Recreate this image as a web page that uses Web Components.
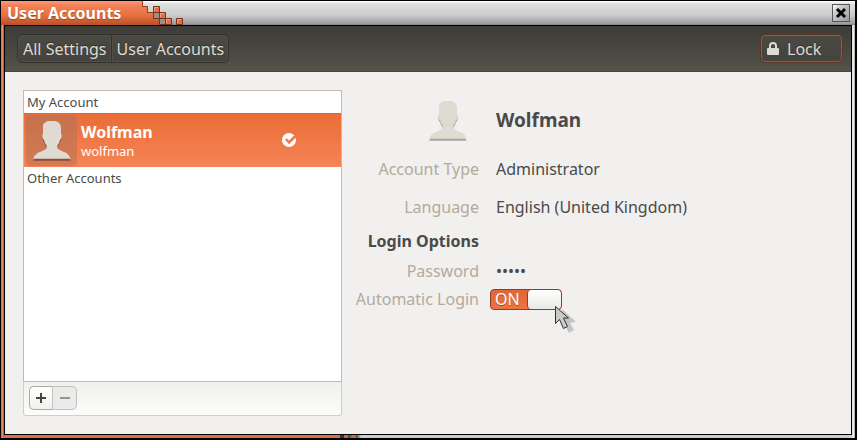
<!DOCTYPE html>
<html lang="en">
<head>
<meta charset="utf-8">
<meta name="viewport" content="width=device-width, initial-scale=1">
<title>User Accounts</title>
<style>
    html { height: 100%; }
    body {
        display: flex;
        min-height: 100%;
        margin: 0;
        background: #000;
        color: #4a4a4a;
        font-family: "Noto Sans", "Open Sans", sans-serif;
        font-size: 16px;
        line-height: 20px;
    }
    app-window { flex: 1; }
</style>
</head>
<body>
    <app-window heading="User Accounts">
        <tool-bar slot="toolbar"></tool-bar>
        <account-list>
            <list-heading>My Account</list-heading>
            <account-row name="Wolfman" login="wolfman"></account-row>
            <list-heading>Other Accounts</list-heading>
        </account-list>
        <account-details>
            <setting-row class="person">
                <user-avatar slot="label"></user-avatar>
                <strong>Wolfman</strong>
            </setting-row>
            <setting-row>
                <span slot="label">Account Type</span>
                Administrator
            </setting-row>
            <setting-row>
                <span slot="label">Language</span>
                English (United Kingdom)
            </setting-row>
            <setting-row class="section">
                <strong slot="label">Login Options</strong>
            </setting-row>
            <setting-row class="compact">
                <span slot="label">Password</span>
                •••••
            </setting-row>
            <setting-row class="compact">
                <label slot="label" for="autologin">Automatic Login</label>
                <toggle-switch slot="control" id="autologin" label="Automatic Login"></toggle-switch>
            </setting-row>
        </account-details>
    </app-window>

<script>
class AppWindow extends HTMLElement {
    connectedCallback() {
        this.attachShadow({ mode: 'open' });
        this.shadowRoot.innerHTML = `
            <style>
                :host {
                    display: flex;
                    box-sizing: border-box;
                    padding: 1px 2px 2px 1px;
                    background: #000;
                }
                .frame {
                    flex: 1;
                    display: flex;
                    flex-direction: column;
                    padding: 0 3px 3px;
                    background:
                        linear-gradient(90deg, #d96c43, #e58a66 50%, #a54f2f) left / 3px 100% no-repeat,
                        linear-gradient(90deg, #ddd, #eee 50%, #999) right / 3px 100% no-repeat,
                        linear-gradient(90deg, #d9714a 339px, #333 339px, #333 343px, #c8683f 343px, #c8683f 347px, #444 347px, #777 351px, #c8683f 351px, #c8683f 355px, #444 355px, #ccc 360px) bottom / 100% 3px no-repeat;
                }
                header {
                    display: flex;
                    align-items: stretch;
                    height: 24px;
                    margin: 0 -3px;
                    background: linear-gradient(#fff, #e0e0e0 3px, #cdcdcd 14px, #9a9a9a 23px, #777);
                }
                h1 {
                    box-sizing: border-box;
                    width: 141px;
                    margin: 0;
                    padding: 2px 6px;
                    background: linear-gradient(#ff9b73, #f38259 4px, #e8713f 14px, #b85029);
                    color: #fff;
                    font-size: 16px;
                    font-weight: 700;
                    line-height: 20px;
                    white-space: nowrap;
                    text-shadow: 0 1px 1px #a34522;
                }
                .spacer { flex: 1; }
                button {
                    align-self: center;
                    width: 18px;
                    height: 18px;
                    margin-right: 5px;
                    padding: 0;
                    border: 1px solid #555;
                    background: linear-gradient(135deg, #fff, #ccc 30%, #999);
                }
                button svg { display: block; }
                .client {
                    flex: 1;
                    display: flex;
                    flex-direction: column;
                    border: 1px solid #000;
                    background: #f1f0ee;
                }
                main {
                    flex: 1;
                    display: flex;
                    padding: 18px;
                }
            </style>
            <div class="frame">
                <header>
                    <h1></h1>
                    <svg width="50" height="24" aria-hidden="true">
                        <defs>
                            <linearGradient id="tab" x1="0" y1="0" x2="0" y2="24" gradientUnits="userSpaceOnUse">
                                <stop stop-color="#ff9b73"/><stop offset=".17" stop-color="#f38259"/><stop offset=".58" stop-color="#e8713f"/><stop offset="1" stop-color="#b85029"/>
                            </linearGradient>
                        </defs>
                        <path d="M0 0h1v5h5v6h6v6h6v7H0z" fill="url(#tab)"/>
                        <path d="M.500 0v5.500h5v6h6v6h6V24" fill="none" stroke="#8a3f22"/>
                        <path d="M11.500 11.500h6v6h-6zM17.500 17.500h6v6h-6z" fill="#9a8f8a" stroke="#7a3219"/>
                        <path d="M11.500 5.500h6v6h-6zM17.500 11.500h6v6h-6zM23.500 17.500h6v6h-6zM34.500 17.500h6v6h-6z" fill="#d9734b" stroke="#7a3219"/>
                        <path d="M12.500 10V6.500H16M18.500 16v-3.500H22M24.500 22v-3.500H28M35.500 22v-3.500H39" fill="none" stroke="#f5a27f"/>
                    </svg>
                    <div class="spacer"></div>
                    <button type="button" aria-label="Close">
                        <svg width="16" height="16"><path d="M4 4l8 8M12 4l-8 8" stroke="#000" stroke-width="3"/></svg>
                    </button>
                </header>
                <div class="client">
                    <slot name="toolbar"></slot>
                    <main><slot></slot></main>
                </div>
            </div>
        `;
        this.shadowRoot.querySelector('h1').textContent = this.getAttribute('heading');
    }
}

class ToolBar extends HTMLElement {
    connectedCallback() {
        this.attachShadow({ mode: 'open' });
        this.shadowRoot.innerHTML = `
            <style>
                :host {
                    display: flex;
                    justify-content: space-between;
                    align-items: center;
                    box-sizing: border-box;
                    height: 46px;
                    padding: 0 8px 0 12px;
                    border-bottom: 1px solid #47443d;
                    background: linear-gradient(#3c3b37, #55524a);
                }
                nav { display: flex; }
                button {
                    box-sizing: border-box;
                    height: 29px;
                    padding: 0 4px 0 5px;
                    border: 1px solid #33322e;
                    background: linear-gradient(#4a4943, #45433d);
                    box-shadow: inset 0 0 0 1px #504e47;
                    color: #dfdbd2;
                    font: inherit;
                    text-shadow: 0 -1px #2f2e2a;
                    white-space: nowrap;
                }
                nav button:first-child { border-radius: 5px 0 0 5px; }
                nav button:last-child { border-left: 0; border-radius: 0 5px 5px 0; }
                .lock {
                    display: flex;
                    align-items: center;
                    gap: 8px;
                    width: 83px;
                    padding: 0 6px;
                    border-color: #5f3524;
                    border-radius: 5px;
                    box-shadow: inset 0 0 0 1px #80604e;
                }
            </style>
            <nav aria-label="Breadcrumb">
                <button type="button">All Settings</button>
                <button type="button">User Accounts</button>
            </nav>
            <button type="button" class="lock">
                <svg width="12" height="14" aria-hidden="true">
                    <path d="M3 7V4a3 3 0 0 1 6 0v3" fill="none" stroke="#dfdbd2" stroke-width="2"/>
                    <rect y="6" width="12" height="7" rx="1" fill="#dfdbd2"/>
                </svg>
                Lock
            </button>
        `;
    }
}

class UserAvatar extends HTMLElement {
    connectedCallback() {
        this.attachShadow({ mode: 'open' });
        this.shadowRoot.innerHTML = `
            <style>
                :host { display: block; }
                svg { display: block; }
                .shade { fill: var(--avatar-shade, #a5a49f); }
                .body { fill: #dfdbd2; }
            </style>
            <svg width="38" height="41" viewBox="0 0 114 123" role="img" aria-label="User picture">
                <defs>
                    <path id="bust" d="M30 22C29 10 38 5 42 5L44 2Q48 4 56 3C72 1 84 8 84 23V41Q87 42 86 50Q85 59 81 60Q79 70 73 77V83C75 91 91 93 101 100Q110 105 113 116H1Q4 106 13 100C23 93 39 91 41 83V77Q35 70 33 60Q29 59 28 50Q27 42 30 41Z"/>
                </defs>
                <use href="#bust" class="shade" y="6"/>
                <use href="#bust" class="body"/>
            </svg>
        `;
    }
}

class ListHeading extends HTMLElement {
    connectedCallback() {
        this.attachShadow({ mode: 'open' });
        this.shadowRoot.innerHTML = `
            <style>
                :host {
                    display: block;
                    padding: 2px 3px;
                    font-size: 13px;
                    line-height: 18px;
                }
            </style>
            <slot></slot>
        `;
    }
}

class AccountRow extends HTMLElement {
    connectedCallback() {
        this.attachShadow({ mode: 'open' });
        this.shadowRoot.innerHTML = `
            <style>
                :host {
                    display: flex;
                    align-items: center;
                    box-sizing: border-box;
                    height: 54px;
                    padding: 0 44px 0 2px;
                    border-top: 1px solid #b9714f;
                    background: linear-gradient(#e96d37, #f68455);
                    color: #fff;
                }
                .tile {
                    display: flex;
                    justify-content: center;
                    align-items: center;
                    width: 51px;
                    height: 51px;
                    margin-right: 4px;
                    border-radius: 4px;
                    background: linear-gradient(#c6714d, #d47a54);
                    --avatar-shade: #8d4f36;
                }
                .names { flex: 1; }
                strong, span { display: block; }
                span {
                    font-size: 13px;
                    line-height: 18px;
                }
            </style>
            <div class="tile"><user-avatar></user-avatar></div>
            <div class="names"><strong></strong><span></span></div>
            <svg width="15" height="15" role="img" aria-label="Signed in">
                <circle cx="7" cy="7" r="7" fill="#fff"/>
                <path d="M4 6l3 3.500L14 2.500" fill="none" stroke="#ef7845" stroke-width="2.500"/>
            </svg>
        `;
        this.shadowRoot.querySelector('strong').textContent = this.getAttribute('name');
        this.shadowRoot.querySelector('span').textContent = this.getAttribute('login');
    }
}

class AccountList extends HTMLElement {
    connectedCallback() {
        this.attachShadow({ mode: 'open' });
        this.shadowRoot.innerHTML = `
            <style>
                :host {
                    flex: none;
                    display: flex;
                    flex-direction: column;
                    box-sizing: border-box;
                    width: 319px;
                }
                .list {
                    flex: 1;
                    border: 1px solid #bfbab3;
                    background: #fff;
                }
                footer {
                    display: flex;
                    align-items: center;
                    box-sizing: border-box;
                    height: 34px;
                    padding: 0 5px 2px;
                    border: 1px solid #d0cfcb;
                    border-top: 0;
                    border-radius: 0 0 3px 3px;
                    background: linear-gradient(#f0f0ed, #fcfcfb);
                }
                button {
                    box-sizing: border-box;
                    width: 24px;
                    height: 24px;
                    padding: 0;
                    border: 1px solid #aaa9a5;
                    background: linear-gradient(#fff, #f0f0ee);
                }
                button svg { display: block; margin: auto; }
                .add { border-right-color: #c5c4c0; border-radius: 5px 0 0 5px; }
                .remove {
                    border-color: #c0bfbb;
                    border-left: 0;
                    border-radius: 0 5px 5px 0;
                    background: #ebebeb;
                }
            </style>
            <div class="list"><slot></slot></div>
            <footer>
                <button type="button" class="add" aria-label="Add account">
                    <svg width="10" height="10"><path d="M0 5h10M5 0v10" stroke="#444" stroke-width="2"/></svg>
                </button>
                <button type="button" class="remove" aria-label="Remove account" disabled>
                    <svg width="10" height="10"><path d="M0 5h10" stroke="#969590" stroke-width="2"/></svg>
                </button>
            </footer>
        `;
    }
}

class AccountDetails extends HTMLElement {
    connectedCallback() {
        this.attachShadow({ mode: 'open' });
        this.shadowRoot.innerHTML = `
            <style>
                :host { display: block; flex: 1; min-width: 0; }
            </style>
            <slot></slot>
        `;
    }
}

class SettingRow extends HTMLElement {
    connectedCallback() {
        this.attachShadow({ mode: 'open' });
        this.shadowRoot.innerHTML = `
            <style>
                :host {
                    display: grid;
                    grid-template-columns: 137px 1fr;
                    column-gap: 11px;
                    align-items: center;
                    height: 38px;
                }
                :host(.person) { height: 60px; font-size: 19px; }
                :host(.section) { height: 30px; margin-bottom: 1px; }
                :host(.compact) { height: 28px; }
                .label {
                    display: flex;
                    justify-content: flex-end;
                    color: #b3aa9c;
                    white-space: nowrap;
                }
                :host(.person) .label { padding-right: 12px; }
                :host(.section) .label { color: #4a4a4a; }
                .value { padding-left: 6px; }
                .row { display: flex; align-items: center; }
            </style>
            <div class="label"><slot name="label"></slot></div>
            <div class="row">
                <slot name="control"></slot>
                <div class="value"><slot></slot></div>
            </div>
        `;
    }
}

class ToggleSwitch extends HTMLElement {
    static formAssociated = true;

    connectedCallback() {
        this.attachShadow({ mode: 'open', delegatesFocus: true });
        this.shadowRoot.innerHTML = `
            <style>
                :host { display: block; position: relative; }
                .track {
                    display: grid;
                    grid-template-columns: 36px 1fr;
                    box-sizing: border-box;
                    width: 72px;
                    height: 21px;
                    border: 1px solid #8b4024;
                    border-radius: 4px;
                    background: linear-gradient(#df6636, #ee7442);
                    color: #fff;
                    line-height: 19px;
                }
                input {
                    position: absolute;
                    inset: 0;
                    margin: 0;
                    opacity: 0;
                }
                .text { padding-left: 4px; text-shadow: 0 1px #a34b2a; }
                .knob {
                    border-left: 1px solid #8b4024;
                    border-radius: 4px;
                    background: linear-gradient(#fff, #e9e9e7);
                }
                .pointer {
                    position: absolute;
                    left: 64px;
                    top: 16px;
                    pointer-events: none;
                }
            </style>
            <div class="track">
                <span class="text">ON</span>
                <span class="knob"></span>
            </div>
            <input type="checkbox" role="switch" checked>
            <svg class="pointer" width="24" height="30" aria-hidden="true">
                <path d="M8 4l14 13-6 1 4 7-5 3-5-9-2 3z" fill="#000" opacity=".18"/>
                <path d="M1.500 1.500v17l4-4 4 9 4-2-4-8.500h5z" fill="#c9c9c9" stroke="#333"/>
            </svg>
        `;
        this.shadowRoot.querySelector('input').setAttribute('aria-label', this.getAttribute('label'));
    }
}

customElements.define('app-window', AppWindow);
customElements.define('tool-bar', ToolBar);
customElements.define('user-avatar', UserAvatar);
customElements.define('list-heading', ListHeading);
customElements.define('account-row', AccountRow);
customElements.define('account-list', AccountList);
customElements.define('account-details', AccountDetails);
customElements.define('setting-row', SettingRow);
customElements.define('toggle-switch', ToggleSwitch);
</script>
</body>
</html>
